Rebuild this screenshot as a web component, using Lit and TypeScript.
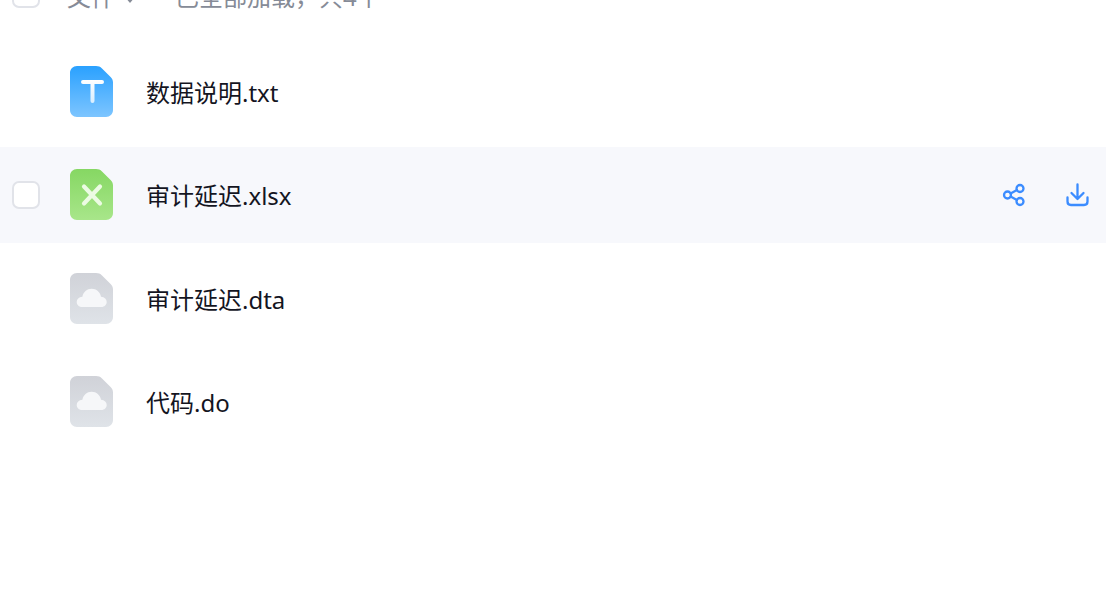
import { LitElement, html, css, svg } from 'lit';
import { customElement } from 'lit/decorators.js';
import { classMap } from 'lit/directives/class-map.js';

type Kind = 'txt' | 'xls' | 'other';

const FILES: { name: string; kind: Kind; active?: boolean }[] = [
  { name: '数据说明.txt', kind: 'txt' },
  { name: '审计延迟.xlsx', kind: 'xls', active: true },
  { name: '审计延迟.dta', kind: 'other' },
  { name: '代码.do', kind: 'other' },
];

// gradient colours for the file icon body
const BODY: Record<Kind, [string, string]> = {
  txt: ['#2aa1ff', '#7dc5ff'],
  xls: ['#86d763', '#a8e68a'],
  other: ['#d0d2d8', '#dfe3e8'],
};

// white glyph on top of the file icon
const glyph = (kind: Kind) => {
  if (kind === 'txt') {
    return svg`<path d="M13 16H32M22.5 16V35" fill="none" stroke="url(#mark)" stroke-width="4" stroke-linecap="round"/>`;
  }
  if (kind === 'xls') {
    return svg`<path d="M14 17.5L30 34.5M30 17.5L14 34.5" fill="none" stroke="#ecfbe3" stroke-width="4.2" stroke-linecap="round"/>`;
  }
  return svg`<path d="M12 34C9 34 6.7 31.8 6.7 29C6.7 26.2 8.8 24.2 12.4 23.8C13.2 19 17 15.7 21.7 15.7C26.4 15.7 30.2 19 31 23.8C34.6 24.2 36.7 26.2 36.7 29C36.7 31.8 34.4 34 31.4 34Z" fill="#f6f7f9"/>`;
};

@customElement('app-root')
export class AppRoot extends LitElement {
  static styles = css`
    :host {
      display: block;
      height: 592px;
      overflow: hidden;
      background: #fff;
      font-family: 'Noto Sans', 'Noto Sans CJK SC', sans-serif;
      color: #14151f;
    }
    .head {
      display: flex;
      align-items: center;
      height: 60px;
      margin-top: -36px;
      margin-bottom: 19.5px;
      padding-left: 12px;
      font-size: 24px;
      color: #868b97;
    }
    .head .all {
      margin-left: 27px;
      display: flex;
      align-items: center;
      gap: 9px;
      padding-top: 3px;
    }
    .head .caret {
      margin-top: 9px;
    }
    .head .count {
      margin-left: 39px;
      padding-top: 3px;
    }
    .list {
      display: flex;
      flex-direction: column;
      gap: 7px;
    }
    .row {
      display: flex;
      align-items: center;
      height: 96.33px;
      padding-left: 12px;
    }
    .row.active {
      background: #f7f8fc;
    }
    .check {
      box-sizing: border-box;
      width: 28px;
      height: 28px;
      flex: none;
      border: 2px solid #e1e3e9;
      border-radius: 7px;
      background: #fff;
    }
    .row .check {
      visibility: hidden;
    }
    .row.active .check {
      visibility: visible;
    }
    .file-icon {
      display: block;
      flex: none;
      margin-left: 30px;
      width: 43px;
      height: 51px;
    }
    .name {
      margin-left: 33px;
      padding-top: 3px;
      font-size: 24px;
      line-height: 32px;
    }
    .actions {
      margin-left: auto;
      display: flex;
      gap: 39px;
      padding-right: 17px;
    }
    .actions svg {
      display: block;
      width: 24px;
      height: 24px;
      fill: none;
      stroke: #3b8cff;
      stroke-width: 2.3;
      stroke-linecap: round;
      stroke-linejoin: round;
    }
  `;

  fileIcon(kind: Kind) {
    const [top, bottom] = BODY[kind];
    return html`<svg class="file-icon" viewBox="0 0 43 51">
      <defs>
        <linearGradient id="body-${kind}" x1="0" y1="0" x2="0" y2="1">
          <stop offset="0" stop-color=${top}></stop>
          <stop offset="1" stop-color=${bottom}></stop>
        </linearGradient>
        <linearGradient id="mark" gradientUnits="userSpaceOnUse" x1="0" y1="14" x2="0" y2="37">
          <stop offset="0" stop-color="#ffffff"></stop>
          <stop offset="1" stop-color="#d8eeff"></stop>
        </linearGradient>
      </defs>
      <path
        d="M7 0H26C28.5 0 30.3 .8 32 2.4L40.6 11C42.2 12.6 43 14.4 43 16.6V44C43 47.9 39.9 51 36 51H7C3.1 51 0 47.9 0 44V7C0 3.1 3.1 0 7 0Z"
        fill="url(#body-${kind})"
      ></path>
      ${glyph(kind)}
    </svg>`;
  }

  render() {
    return html`
      <div class="head">
        <span class="check"></span>
        <span class="all">
          文件
          <svg class="caret" width="12" height="8" viewBox="0 0 12 8"><path d="M1 1L6 7L11 1Z" fill="#868b97"></path></svg>
        </span>
        <span class="count">已全部加载，共4个</span>
      </div>
      <div class="list">
        ${FILES.map(
          (f) => html`
            <div class=${classMap({ row: true, active: !!f.active })}>
              <span class="check"></span>
              ${this.fileIcon(f.kind)}
              <span class="name">${f.name}</span>
              ${f.active
                ? html`<div class="actions">
                    <svg viewBox="0 0 24 24">
                      <circle cx="5.5" cy="12" r="3.5"></circle>
                      <circle cx="18" cy="5.5" r="3.5"></circle>
                      <circle cx="18" cy="18.5" r="3.5"></circle>
                      <path d="M8.6 10.4L14.9 7.1M8.6 13.6L14.9 16.9"></path>
                    </svg>
                    <svg viewBox="0 0 24 24">
                      <path d="M12.5 1.5V15.5M6.5 10L12.5 16L18.5 10"></path>
                      <path d="M2.5 14.5V18.5C2.5 20.7 3.8 22 6 22H19C21.2 22 22.5 20.7 22.5 18.5V14.5"></path>
                    </svg>
                  </div>`
                : ''}
            </div>
          `,
        )}
      </div>
    `;
  }
}
